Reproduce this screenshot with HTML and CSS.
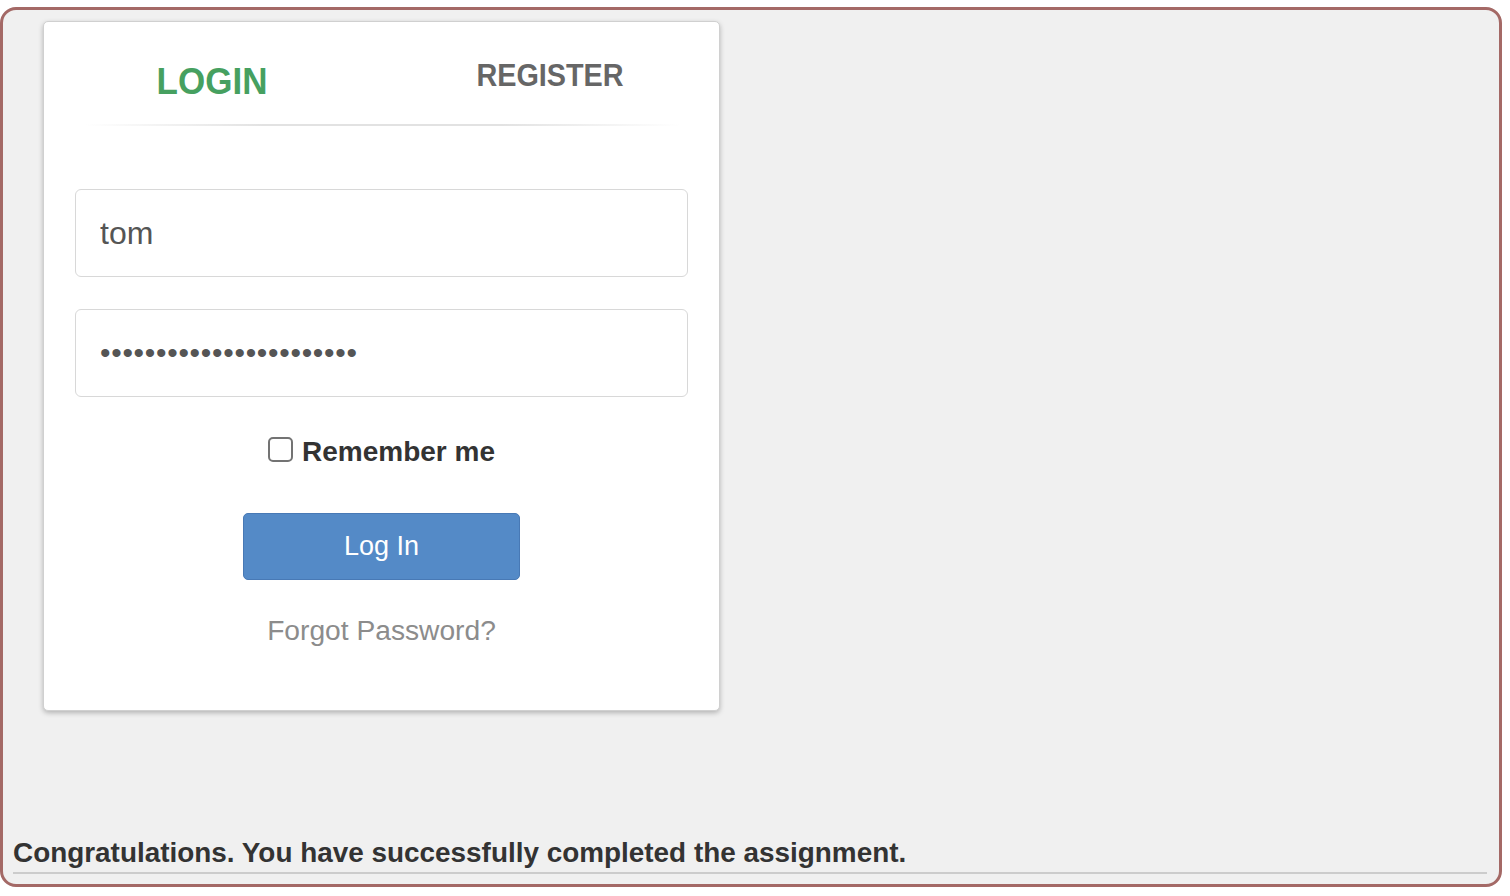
FILE: index.html
```html
<!DOCTYPE html>
<html>
<head>
<meta charset="utf-8">
<title>Login</title>
<link rel="stylesheet" href="styles.css">
</head>
<body>
<div class="frame">
  <div class="card">
    <div class="tabs">
      <a class="tab tab-active">LOGIN</a>
      <a class="tab tab-other">REGISTER</a>
    </div>
    <div class="divider"></div>
    <form class="form">
      <input class="field field-text" type="text" value="tom">
      <input class="field field-pass" type="password" value="thisisasecretfortomonly">
      <label class="remember"><input class="check" type="checkbox"><span>Remember me</span></label>
      <button class="btn" type="button">Log In</button>
      <a class="forgot">Forgot Password?</a>
    </form>
  </div>
  <div class="message">Congratulations. You have successfully completed the assignment.</div>
</div>
</body>
</html>
```

FILE: styles.css
```css
html, body {
  margin: 0;
  padding: 0;
  background: #ffffff;
}
body {
  font-family: "Liberation Sans", Arial, Helvetica, sans-serif;
}
.frame {
  box-sizing: border-box;
  margin: 7px 8px 0 0;
  height: 880px;
  border: 3px solid #a46966;
  border-radius: 16px;
  background: #f0f0f0;
  display: flex;
  flex-direction: column;
  padding: 11px 0 10px 0;
}
.card {
  box-sizing: border-box;
  margin-left: 40px;
  width: 677px;
  height: 690px;
  background: #ffffff;
  border: 1px solid #d0d0d0;
  border-radius: 5px;
  box-shadow: 0 2px 5px rgba(0, 0, 0, 0.25);
  padding: 0 31px;
}
.tabs {
  display: flex;
  height: 102px;
  padding-left: 37px;
}
.tab {
  display: block;
  width: 200px;
  text-align: center;
  font-weight: bold;
  line-height: 1;
  transform-origin: center top;
}
.tab-active {
  font-size: 35px;
  color: #46a060;
  margin-top: 40px;
  transform: scaleY(1.08);
}
.tab-other {
  font-size: 28.8px;
  color: #666666;
  margin-top: 38px;
  margin-left: 138px;
  transform: scaleY(1.1);
}
.divider {
  height: 2px;
  margin: 0 8px 0 10px;
  background: linear-gradient(to right, rgba(225,225,225,0), #e2e2e2 30%, #e2e2e2 70%, rgba(225,225,225,0));
}
.form {
  display: flex;
  flex-direction: column;
  align-items: center;
  padding-top: 63px;
}
.field {
  box-sizing: border-box;
  width: 613px;
  height: 88px;
  border: 1px solid #d8d8d8;
  border-radius: 6px;
  padding: 0 24px;
  font-family: "Liberation Sans", Arial, Helvetica, sans-serif;
  font-size: 32px;
  color: #555555;
  background: #ffffff;
  outline: none;
}
.field-pass {
  margin-top: 32px;
  font-size: 30px;
  letter-spacing: 0.7px;
}
.remember {
  display: flex;
  align-items: center;
  margin-top: 39px;
  font-size: 28px;
  font-weight: bold;
  color: #333333;
}
.check {
  appearance: none;
  -webkit-appearance: none;
  box-sizing: border-box;
  width: 25px;
  height: 25px;
  margin: 0 9px 6px 0;
  border: 2px solid #737373;
  border-radius: 5px;
  background: #ffffff;
}
.btn {
  box-sizing: border-box;
  margin-top: 45px;
  width: 277px;
  height: 67px;
  background: #548ac7;
  border: 1px solid #4879b5;
  border-radius: 5px;
  color: #ffffff;
  font-family: "Liberation Sans", Arial, Helvetica, sans-serif;
  font-size: 27px;
  padding: 0;
}
.forgot {
  margin-top: 34px;
  font-size: 28.2px;
  color: #8c8c8c;
}
.message {
  margin: auto 12px 0 10px;
  font-size: 27.9px;
  font-weight: bold;
  color: #333333;
  line-height: 1.2;
  padding-bottom: 3px;
  border-bottom: 2px solid #cccccc;
}
```
